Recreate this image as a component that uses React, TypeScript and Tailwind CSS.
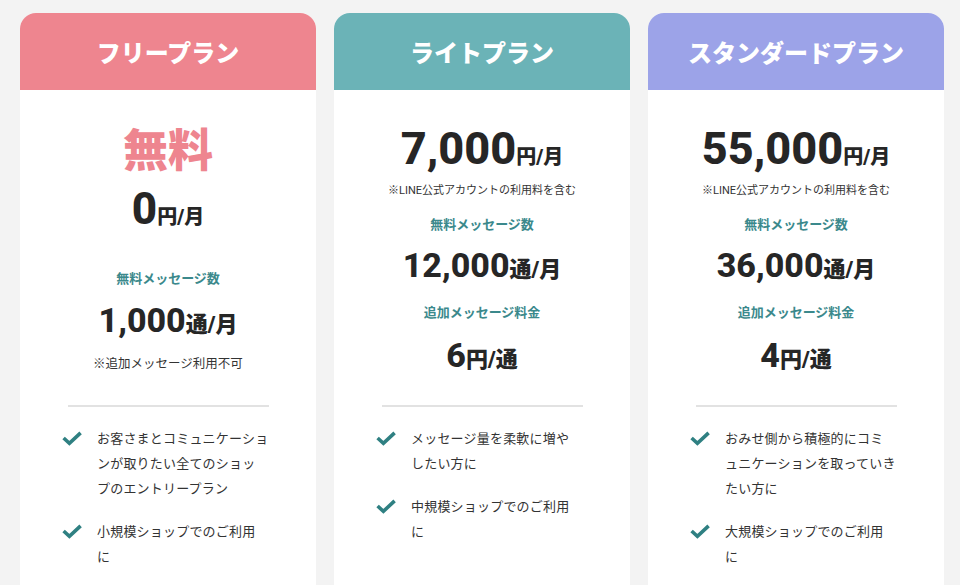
import React from "react";

const FONT = { fontFamily: 'Roboto, "Noto Sans CJK JP", sans-serif' };
const JP = { fontFamily: '"Noto Sans CJK JP", sans-serif' };

function Check() {
  return (
    <svg width="20" height="15" viewBox="0 0 20 15" className="shrink-0 mt-[6px]">
      <path d="M1.6 7 L7.4 12.3 L18.6 1.9" fill="none" stroke="#2f8082" strokeWidth="3.6" strokeLinejoin="miter" />
    </svg>
  );
}

function List({ items }: { items: string[][] }) {
  return (
    <div className="pl-[42px] pt-[18px] flex flex-col gap-[18px]" style={JP}>
      {items.map((lines, i) => (
        <div key={i} className="flex gap-[15px]">
          <Check />
          <div className="text-[13px] tracking-[0.2px] leading-[25px] text-[#333333] whitespace-nowrap">
            {lines.map((l, j) => (
              <div key={j}>{l}</div>
            ))}
          </div>
        </div>
      ))}
    </div>
  );
}

function Header({ title, color }: { title: string; color: string }) {
  return (
    <div
      className={`h-[77px] rounded-t-[16px] flex items-center justify-center text-white text-[24px] font-black ${color}`}
      style={JP}
    >
      {title}
    </div>
  );
}

function Divider() {
  return <div className="mx-auto w-[201px] h-[2px] bg-[#e2e2e2]" />;
}

function Label({ children, className }: { children: React.ReactNode; className?: string }) {
  return (
    <div className={`h-[20px] flex items-center justify-center text-[13px] font-bold text-[#3b898c] ${className ?? ""}`} style={JP}>
      {children}
    </div>
  );
}

function Price({ big, small, bigSize, smallSize, h, mt }: { big: string; small: string; bigSize: string; smallSize: string; h: string; mt: string }) {
  return (
    <div className={`${mt} ${h} flex items-center justify-center font-extrabold leading-none text-[#262626]`}>
      <span>
        <span className={bigSize}>{big}</span>
        <span className={`${smallSize} font-black`}>{small}</span>
      </span>
    </div>
  );
}

export default function App() {
  return (
    <div className="w-[960px] h-[585px] bg-[#f3f3f3] overflow-hidden pt-[13px] pl-[20px] flex gap-[18px]" style={FONT}>
      {/* Free */}
      <div className="w-[296px] bg-white rounded-t-[16px] flex flex-col">
        <Header title="フリープラン" color="bg-[#ee858f]" />
        <div className="h-[315px] flex flex-col text-[#262626]">
          <div className="mt-[34px] h-[46px] flex items-center justify-center text-[45px] font-black text-[#ee858f] leading-none" style={JP}>
            無料
          </div>
          <Price big="0" small="円/月" bigSize="text-[44px]" smallSize="text-[20px]" h="h-[46px]" mt="mt-[16px]" />
          <Label className="mt-[36px]">無料メッセージ数</Label>
          <Price big="1,000" small="通/月" bigSize="text-[34px]" smallSize="text-[22px]" h="h-[40px]" mt="mt-[12px]" />
          <div className="mt-[13px] h-[20px] flex items-center justify-center text-[12.5px] text-[#333]" style={JP}>
            ※追加メッセージ利用不可
          </div>
        </div>
        <Divider />
        <List
          items={[
            ["お客さまとコミュニケーショ", "ンが取りたい全てのショッ", "プのエントリープラン"],
            ["小規模ショップでのご利用", "に"],
          ]}
        />
      </div>

      {/* Light */}
      <div className="w-[296px] bg-white rounded-t-[16px] flex flex-col">
        <Header title="ライトプラン" color="bg-[#6bb3b7]" />
        <div className="h-[315px] flex flex-col text-[#262626]">
          <Price big="7,000" small="円/月" bigSize="text-[45px]" smallSize="text-[20px]" h="h-[46px]" mt="mt-[35px]" />
          <div className="mt-[11px] h-[18px] flex items-center justify-center text-[11px] text-[#333]">
            ※LINE公式アカウントの利用料を含む
          </div>
          <Label className="mt-[14px]">無料メッセージ数</Label>
          <Price big="12,000" small="通/月" bigSize="text-[34px]" smallSize="text-[22px]" h="h-[40px]" mt="mt-[11px]" />
          <Label className="mt-[17px]">追加メッセージ料金</Label>
          <Price big="6" small="円/通" bigSize="text-[34px]" smallSize="text-[22px]" h="h-[40px]" mt="mt-[13px]" />
        </div>
        <Divider />
        <List
          items={[
            ["メッセージ量を柔軟に増や", "したい方に"],
            ["中規模ショップでのご利用", "に"],
          ]}
        />
      </div>

      {/* Standard */}
      <div className="w-[296px] bg-white rounded-t-[16px] flex flex-col">
        <Header title="スタンダードプラン" color="bg-[#9ca3e8]" />
        <div className="h-[315px] flex flex-col text-[#262626]">
          <Price big="55,000" small="円/月" bigSize="text-[45px]" smallSize="text-[20px]" h="h-[46px]" mt="mt-[35px]" />
          <div className="mt-[11px] h-[18px] flex items-center justify-center text-[11px] text-[#333]">
            ※LINE公式アカウントの利用料を含む
          </div>
          <Label className="mt-[14px]">無料メッセージ数</Label>
          <Price big="36,000" small="通/月" bigSize="text-[34px]" smallSize="text-[22px]" h="h-[40px]" mt="mt-[11px]" />
          <Label className="mt-[17px]">追加メッセージ料金</Label>
          <Price big="4" small="円/通" bigSize="text-[34px]" smallSize="text-[22px]" h="h-[40px]" mt="mt-[13px]" />
        </div>
        <Divider />
        <List
          items={[
            ["おみせ側から積極的にコミ", "ュニケーションを取っていき", "たい方に"],
            ["大規模ショップでのご利用", "に"],
          ]}
        />
      </div>
    </div>
  );
}
